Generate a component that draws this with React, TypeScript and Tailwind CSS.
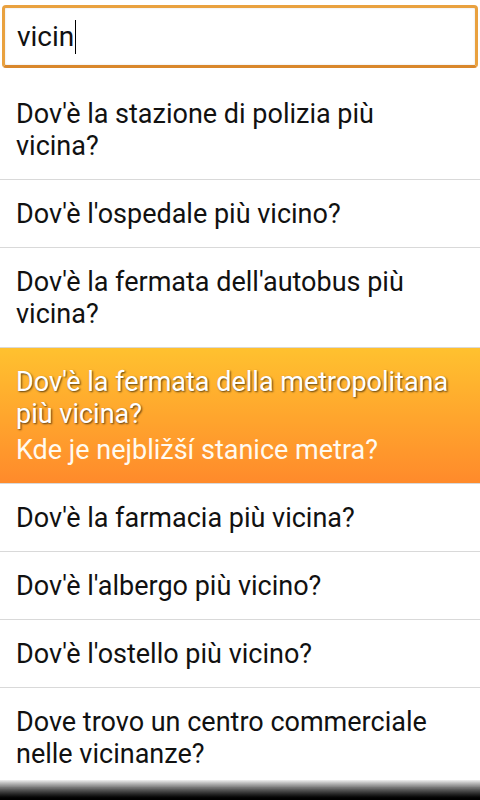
const rows: { it: string; cs?: string }[] = [
  { it: "Dov'è la stazione di polizia più vicina?" },
  { it: "Dov'è l'ospedale più vicino?" },
  { it: "Dov'è la fermata dell'autobus più vicina?" },
  {
    it: "Dov'è la fermata della metropolitana più vicina?",
    cs: "Kde je nejbližší stanice metra?",
  },
  { it: "Dov'è la farmacia più vicina?" },
  { it: "Dov'è l'albergo più vicino?" },
  { it: "Dov'è l'ostello più vicino?" },
  { it: "Dove trovo un centro commerciale nelle vicinanze?" },
];

export default function App() {
  return (
    <div className="relative h-screen w-full overflow-hidden bg-white font-['Roboto',sans-serif] text-[27px] leading-[32px] text-[#111]">
      <div className="px-[2px] pt-[5px] pb-[12px]">
        <div className="flex h-[63px] items-center rounded-[4px] border-[3px] border-[#e9a13f] border-b-[#d9872c] bg-white px-[12px] shadow-[inset_0_0_2px_rgba(0,0,0,0.15)]">
          <span className="text-[28px]">vicin</span>
          <span className="ml-[1px] h-[34px] w-[1px] bg-black" />
        </div>
      </div>
      <ul>
        {rows.map((row, i) => (
          <li
            key={i}
            className={
              row.cs
                ? "border-b border-[#d9d9d9] bg-gradient-to-b from-[#ffc12f] to-[#ff8a2b] pl-4 pr-6 pt-[18px] pb-[17px] text-white"
                : "border-b border-[#d9d9d9] pl-4 pr-6 pt-[18px] pb-[17px]"
            }
          >
            <p
              className={
                row.cs ? "[text-shadow:1px_1px_2px_rgba(0,0,0,0.65)]" : ""
              }
            >
              {row.it}
            </p>
            {row.cs && <p className="mt-[4px] text-[#fffaf0]">{row.cs}</p>}
          </li>
        ))}
      </ul>
      <div className="fixed bottom-0 left-0 h-[20px] w-full bg-gradient-to-b from-[rgba(230,230,230,0.6)] via-[#555] to-black" />
    </div>
  );
}
